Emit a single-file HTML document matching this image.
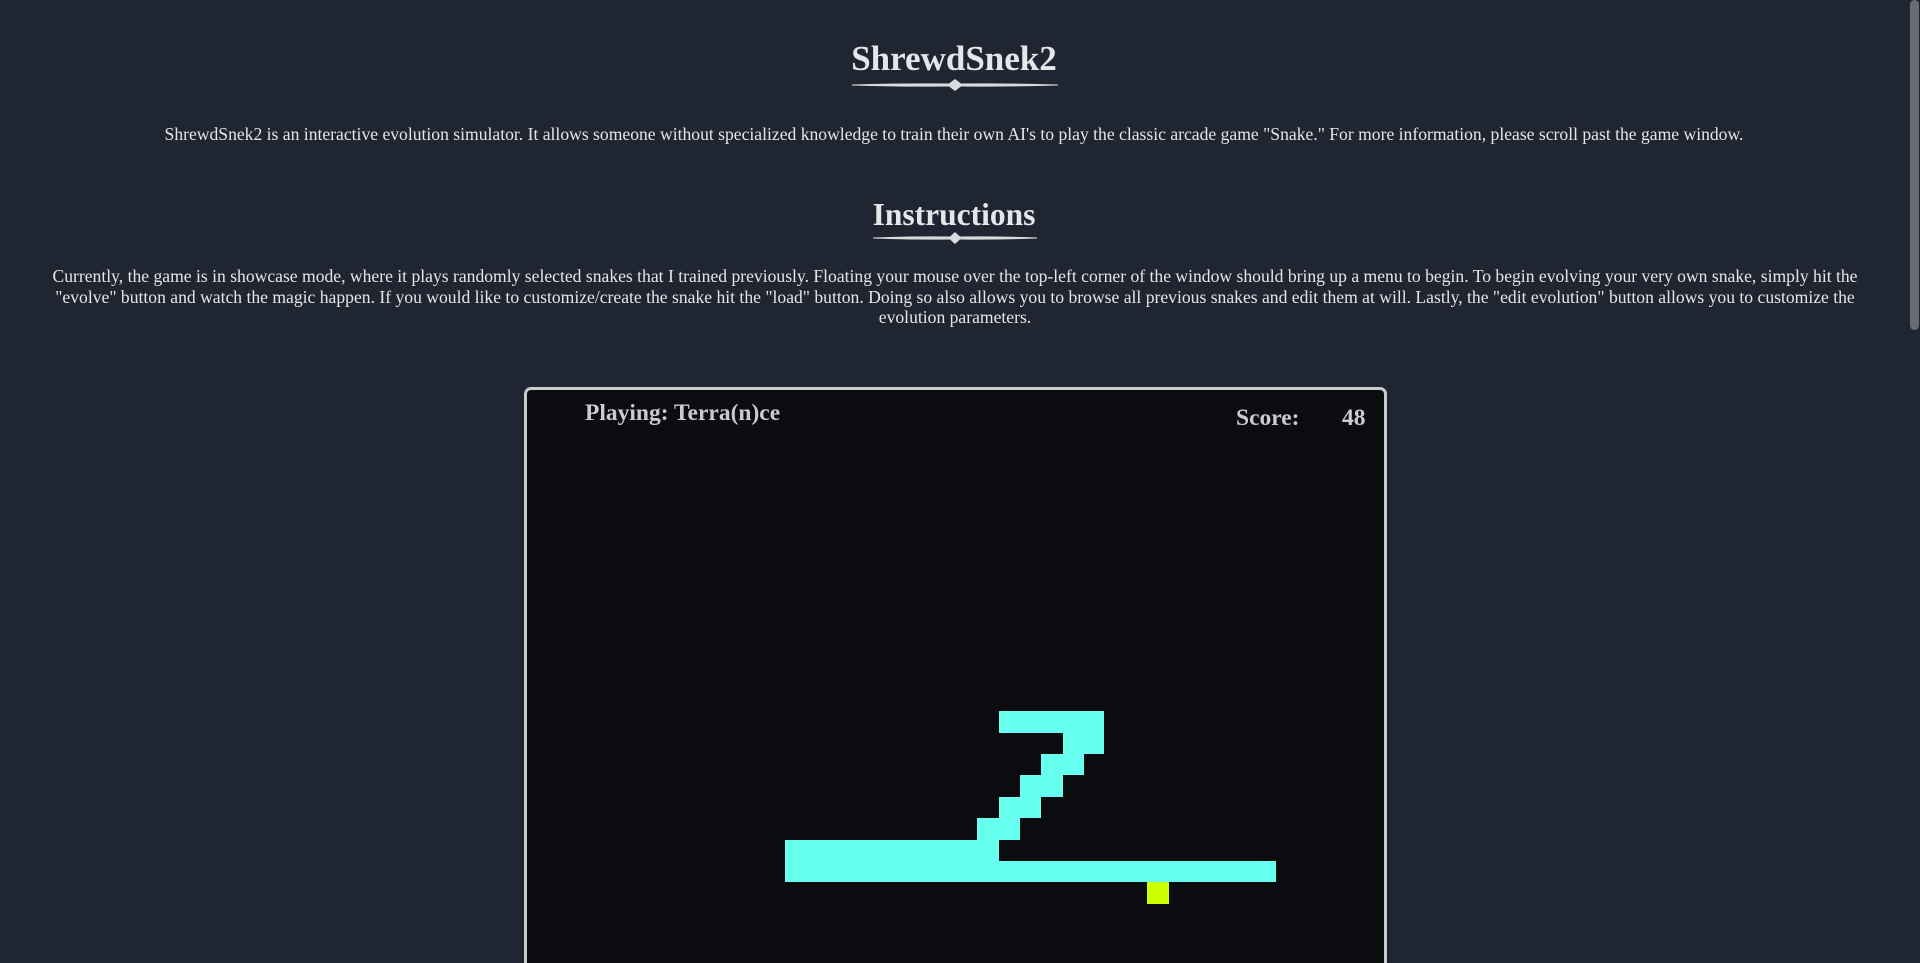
<!DOCTYPE html>
<html style="overflow:hidden;height:963px"><head><meta charset="utf-8"><style>
html,body{margin:0;padding:0;}
body{width:1920px;height:963px;overflow:hidden;background:#1f2631;color:#e6e6e6;font-family:"Liberation Serif",serif;position:relative;}
.main{position:absolute;left:0;top:0;width:1908px;}
h1,h2{font-weight:bold;text-align:center;margin:0;color:#e4e6ea;}
h1{font-size:35px;position:absolute;top:39px;left:0;right:0;line-height:40px;}
h2{font-size:31.5px;position:absolute;top:197px;left:0;right:0;line-height:36px;}
.orn{position:absolute;height:12px;}
.p1{position:absolute;top:124px;left:0;right:0;text-align:center;font-size:17.6px;line-height:21px;}
.p2{position:absolute;top:266px;left:50px;right:48px;text-align:center;font-size:17.6px;line-height:20.7px;}
.game{position:absolute;left:524px;top:387px;width:857px;height:576px;background:#0a0c10;border:3px solid #c8cacd;border-bottom:none;border-radius:7px 7px 0 0;}
.c{position:absolute;background:#66fff0;}
.lbl{position:absolute;color:#c9cbce;font-weight:bold;font-size:23.5px;}
.sb{position:absolute;right:1px;top:0;width:9px;height:330px;background:#676c75;border-radius:5px;}
</style></head><body>
<div class="main">
<h1>ShrewdSnek2</h1>
<svg class="orn" style="left:852px;top:79px" width="206" height="12" viewBox="0 0 206 12"><path d="M0 5.5 Q50 4 97 4.5 L103 0 L109 4.5 Q156 4 206 5.5 L206 6.5 Q156 8 109 7.5 L103 12 L97 7.5 Q50 8 0 6.5Z" fill="#d8dade"/></svg>
<div class="p1">ShrewdSnek2 is an interactive evolution simulator. It allows someone without specialized knowledge to train their own AI's to play the classic arcade game "Snake." For more information, please scroll past the game window.</div>
<h2>Instructions</h2>
<svg class="orn" style="left:873px;top:232px" width="164" height="12" viewBox="0 0 164 12"><path d="M0 5.5 Q40 4 77 4.5 L82 0 L87 4.5 Q124 4 164 5.5 L164 6.5 Q124 8 87 7.5 L82 12 L77 7.5 Q40 8 0 6.5Z" fill="#d8dade"/></svg>
<div class="p2">Currently, the game is in showcase mode, where it plays randomly selected snakes that I trained previously. Floating your mouse over the top-left corner of the window should bring up a menu to begin. To begin evolving your very own snake, simply hit the "evolve" button and watch the magic happen. If you would like to customize/create the snake hit the "load" button. Doing so also allows you to browse all previous snakes and edit them at will. Lastly, the "edit evolution" button allows you to customize the evolution parameters.</div>
</div>
<div class="game"></div>
<div class="lbl" style="left:585px;top:400px">Playing: Terra(n)ce</div>
<div class="lbl" style="left:1236px;top:405px">Score:</div>
<div class="lbl" style="left:1342px;top:405px">48</div>
<div class="c" style="left:999px;top:711px;width:105px;height:22px"></div>
<div class="c" style="left:1063px;top:732px;width:41px;height:22px"></div>
<div class="c" style="left:1041px;top:754px;width:43px;height:21px"></div>
<div class="c" style="left:1020px;top:775px;width:43px;height:22px"></div>
<div class="c" style="left:999px;top:797px;width:42px;height:21px"></div>
<div class="c" style="left:977px;top:818px;width:43px;height:22px"></div>
<div class="c" style="left:785px;top:840px;width:214px;height:42px"></div>
<div class="c" style="left:999px;top:861px;width:277px;height:21px"></div>
<div style="position:absolute;left:1147px;top:882px;width:22px;height:22px;background:#ccff00"></div>
<div class="sb"></div>
</body></html>
